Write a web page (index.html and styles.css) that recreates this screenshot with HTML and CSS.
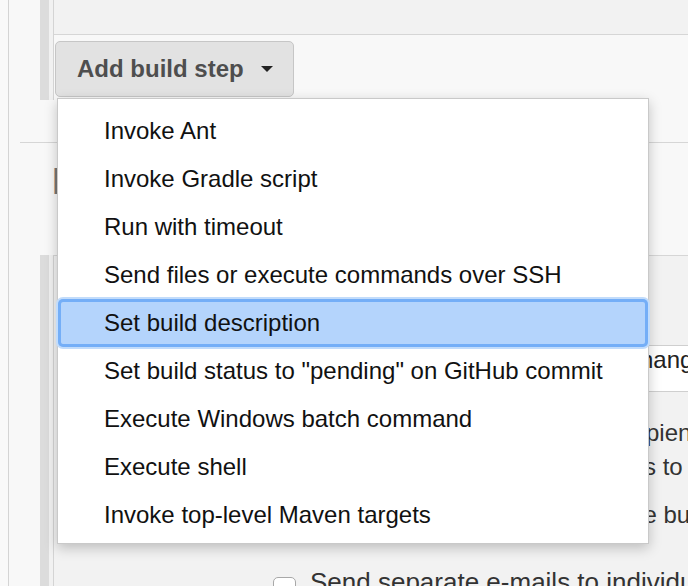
FILE: index.html
```html
<!DOCTYPE html>
<html>
<head>
<meta charset="utf-8">
<link rel="stylesheet" href="styles.css">
</head>
<body>
<div class="page">
  <div class="chunk chunk-build">
    <div class="chunk-band"></div>
    <div class="chunk-body">
      <div class="step-tail"></div>
      <div class="step-actions">
        <button class="add-btn" type="button">Add build step<span class="caret"></span></button>
      </div>
    </div>
  </div>
  <div class="section">
    <h2 class="section-title">Post-build Actions</h2>
  </div>
  <div class="chunk chunk-post">
    <div class="chunk-band"></div>
    <div class="chunk-body post-body">
      <div class="field">changes@example.com</div>
      <div class="help">
        <div class="help-a">Recipients</div>
        <div class="help-b">s to notify</div>
      </div>
      <div class="opt-line">unstable build</div>
      <label class="check-row"><span class="checkbox"></span>Send separate e-mails to individuals who broke the build</label>
    </div>
  </div>
</div>
<ul class="menu">
  <li class="menu-item">Invoke Ant</li>
  <li class="menu-item">Invoke Gradle script</li>
  <li class="menu-item">Run with timeout</li>
  <li class="menu-item">Send files or execute commands over SSH</li>
  <li class="menu-item is-active">Set build description</li>
  <li class="menu-item">Set build status to "pending" on GitHub commit</li>
  <li class="menu-item">Execute Windows batch command</li>
  <li class="menu-item">Execute shell</li>
  <li class="menu-item">Invoke top-level Maven targets</li>
</ul>
</body>
</html>
```
FILE: styles.css
```css
* { box-sizing: border-box; }
html, body {
  margin: 0;
  padding: 0;
  width: 688px;
  height: 586px;
  overflow: hidden;
  background: #f9f9f9;
  font-family: "Liberation Sans", Arial, sans-serif;
  font-size: 24px;
  color: #222;
}
.page {
  margin-left: 8px;
  border-left: 1px solid #d4d4d4;
  padding-left: 11px;
  height: 586px;
  background: #f8f8f8;
}
.chunk {
  margin-left: 20px;
  display: flex;
}
.chunk-band {
  width: 13px;
  background: #dcdcdc;
  border-right: 4px solid #f1f1f1;
  flex: none;
}
.chunk-body {
  flex: 1;
  min-width: 0;
  border-left: 1px solid #d4d4d4;
}
.chunk-build { height: 100px; }
.step-tail {
  height: 35px;
  background: #f2f2f2;
  border-bottom: 1px solid #d6d6d6;
}
.step-actions {
  padding-top: 6px;
  padding-left: 1px;
}
.add-btn {
  display: flex;
  align-items: center;
  height: 56px;
  padding: 0 20px 0 21px;
  border: 1px solid #c6c6c6;
  border-radius: 5px;
  background: #e2e2e2;
  font-family: "Liberation Sans", Arial, sans-serif;
  font-weight: bold;
  font-size: 24px;
  color: #4e4e4e;
}
.caret {
  width: 0;
  height: 0;
  margin-left: 17px;
  border-left: 6px solid transparent;
  border-right: 6px solid transparent;
  border-top: 6px solid #222;
}
.section {
  margin-top: 42px;
  border-top: 1px solid #d6d6d6;
  height: 113px;
}
.section-title {
  margin: 20px 0 0 32px;
  font-size: 37px;
  line-height: 37px;
  font-weight: bold;
  color: #777;
  white-space: nowrap;
}
.chunk-post { height: 332px; }
.post-body {
  background: #f2f2f2;
  border-top: 1px solid #d6d6d6;
  color: #333;
  white-space: nowrap;
  overflow: hidden;
}
.field {
  margin: 89px 0 0 420px;
  height: 47px;
  background: #fff;
  border: 1px solid #cfcfcf;
  border-right: none;
  padding-left: 153px;
  line-height: 28px;
  color: #222;
}
.help { margin-top: 24px; line-height: 34px; }
.help-a { padding-left: 544px; }
.help-b { padding-left: 590px; }
.opt-line {
  margin-top: 14px;
  line-height: 34px;
  padding-left: 512px;
}
.check-row {
  display: flex;
  align-items: center;
  margin-top: 31px;
  padding-left: 219px;
  line-height: 28px;
  font-size: 26px;
}
.checkbox {
  width: 23px;
  height: 23px;
  margin: 14px 14px 0 0;
  border: 1px solid #a8a8a8;
  border-radius: 5px;
  background: #fff;
  flex: none;
}
.menu {
  position: absolute;
  left: 57px;
  top: 98px;
  width: 592px;
  margin: 0;
  padding: 8px 0 4px;
  list-style: none;
  background: #fff;
  border: 1px solid #c9c9c9;
  box-shadow: 0 4px 12px rgba(0, 0, 0, 0.22);
}
.menu-item {
  height: 48px;
  line-height: 48px;
  padding-left: 46px;
  color: #111;
  white-space: nowrap;
}
.menu-item.is-active {
  background: #b4d4fc;
  border-radius: 5px;
  box-shadow: inset 0 0 0 3px #74aef7, 0 0 0 2px #c2dcfb;
}
```
